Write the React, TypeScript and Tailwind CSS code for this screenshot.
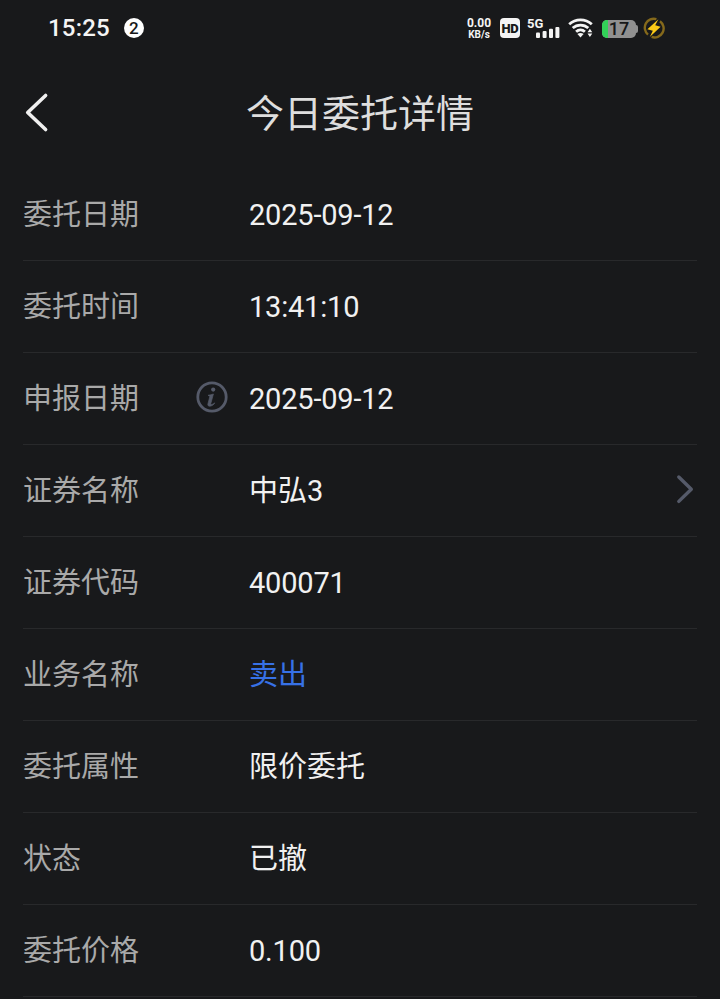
import type { ReactNode } from "react";

type Row = {
  label: string;
  value: string;
  tone?: "blue";
  info?: boolean;
  link?: boolean;
};

const ROWS: Row[] = [
  { label: "委托日期", value: "2025-09-12" },
  { label: "委托时间", value: "13:41:10" },
  { label: "申报日期", value: "2025-09-12", info: true },
  { label: "证券名称", value: "中弘3", link: true },
  { label: "证券代码", value: "400071" },
  { label: "业务名称", value: "卖出", tone: "blue" },
  { label: "委托属性", value: "限价委托" },
  { label: "状态", value: "已撤" },
  { label: "委托价格", value: "0.100" },
];

function WifiIcon() {
  return (
    <svg width="26" height="20" viewBox="0 0 26 20" fill="none" className="shrink-0">
      <g stroke="#f4f4f4" strokeWidth="2.8">
        <path d="M1.2 6.2C7.6 .3 17.4 .3 23.8 6.2" />
        <path d="M4.7 10.1c4.4-4.1 11.2-4.1 15.6 0" />
        <path d="M8.1 13.7c2.5-2.3 6.3-2.3 8.8 0" />
      </g>
      <path d="M12.5 19.4l-3.1-3.3c1.8-1.6 4.4-1.6 6.2 0z" fill="#f4f4f4" />
      <path d="M21.9 10.8l2.4 3.4h-4.8zM21.9 18.9l2.4-3.4h-4.8z" fill="#f4f4f4" />
    </svg>
  );
}

function SignalIcon() {
  return (
    <div className="relative h-6 w-8 shrink-0">
      <span className="absolute -left-px top-0 text-[13px] font-bold leading-[15px]">5G</span>
      <svg width="32" height="24" viewBox="0 0 32 24" className="absolute left-0 top-0" fill="#f4f4f4">
        <rect x="8" y="16.5" width="4" height="5.5" rx="1" />
        <rect x="14.6" y="15" width="4" height="7" rx="1" />
        <rect x="21" y="12.7" width="4" height="9.3" rx="1" />
        <rect x="27.4" y="11" width="4" height="11" rx="1" />
      </svg>
    </div>
  );
}

function Battery() {
  return (
    <div className="flex shrink-0 items-center pt-px">
      <div className="relative flex h-[18px] w-[34px] items-center justify-center rounded-[5px] bg-[#909090]">
        <div className="absolute inset-y-0 left-0 w-[6px] rounded-l-[5px] bg-[#32d158]" />
        <span className="relative text-[18px] font-medium leading-[22px] text-[#171819]">17</span>
      </div>
      <div className="h-2 w-[2px] rounded-r-full bg-[#909090]" />
    </div>
  );
}

function ChargeIcon() {
  return (
    <svg width="22" height="22" viewBox="0 0 22 22" fill="none" className="shrink-0">
      <path d="M13.4 2.1A9 9 0 0 0 5 17.6" stroke="#85691b" strokeWidth="2.4" />
      <path d="M17 4.2A9 9 0 0 1 8.6 19.9" stroke="#85691b" strokeWidth="2.4" />
      <path d="M15.4 2.2L4.4 12.2l5.4 1.6L6.8 20l10.8-10.2-5.4-1.6z" fill="#fac917" />
    </svg>
  );
}

function StatusBar() {
  return (
    <header className="flex h-14 items-center pl-[48px] pr-[55px] text-[#f4f4f4]">
      <span className="text-[24px] font-medium leading-none tracking-[0.2px]">15:25</span>
      <span className="ml-[14px] flex size-5 items-center justify-center rounded-full bg-white text-[17px] font-medium leading-none text-[#171819]">
        2
      </span>
      <div className="ml-auto flex items-center">
        <div className="flex w-[26px] flex-col items-center font-bold">
          <div className="text-[12px] leading-[12px]">0.00</div>
          <div className="text-[10px] leading-[11px]">KB/s</div>
        </div>
        <div className="ml-2 flex h-5 w-5 items-center justify-center rounded-[4px] bg-[#f4f4f4] text-[13px] font-black leading-none tracking-[-0.3px] text-[#171819]">
          HD
        </div>
        <div className="ml-2">
          <SignalIcon />
        </div>
        <div className="ml-2">
          <WifiIcon />
        </div>
        <div className="ml-2">
          <Battery />
        </div>
        <div className="ml-[5px]">
          <ChargeIcon />
        </div>
      </div>
    </header>
  );
}

function TitleBar({ children }: { children: ReactNode }) {
  return (
    <div className="grid h-[113px] grid-cols-[1fr_auto_1fr] items-center">
      <button type="button" aria-label="返回" className="mb-[2px] ml-[24px] w-7">
        <svg width="26" height="42" viewBox="0 0 26 42" fill="none">
          <path
            d="M21.6 4.5L3.7 21.5l17.9 17"
            stroke="#f0f0f0"
            strokeWidth="3.6"
            strokeLinecap="round"
            strokeLinejoin="round"
          />
        </svg>
      </button>
      <h1 className="pt-[3px] text-[38px] leading-[56px] text-[#dedede]">{children}</h1>
    </div>
  );
}

function InfoIcon() {
  return (
    <svg width="32" height="32" viewBox="0 0 32 32" fill="none" className="mb-[4px] shrink-0">
      <circle cx="16" cy="16" r="14.2" stroke="#555a69" strokeWidth="2.8" />
      <circle cx="17.2" cy="8.6" r="2.1" fill="#555a69" />
      <path
        d="M12 14.3c2-.1 3.8-.8 5.4-1.3L14.9 22.2c-.4 1.6.6 2 3.9-.3-2.6 4-7.6 4.4-6.9 1.1l2-7.7z"
        fill="#555a69"
        stroke="#555a69"
        strokeWidth=".7"
        strokeLinejoin="round"
      />
    </svg>
  );
}

function DetailRow({ row }: { row: Row }) {
  const numeric = /^[\d.:-]+$/.test(row.value);

  return (
    <li className="flex h-[92px] items-center border-b border-[#28292b] text-[29px] leading-[42px]">
      <div className="flex w-[226px] items-center justify-between pr-[21px] text-[#a9a9a9]">
        <span>{row.label}</span>
        {row.info && <InfoIcon />}
      </div>
      <span
        className={`${row.tone === "blue" ? "text-[#3771e6]" : "text-[#f1f1f1]"} ${numeric ? "tracking-[-0.2px]" : ""}`}
      >
        {row.value}
      </span>
      {row.link && (
        <svg width="20" height="32" viewBox="0 0 20 32" fill="none" className="mb-[4px] ml-auto mr-[2px]">
          <path
            d="M3.8 4l12.5 12.2L3.8 28.4"
            stroke="#555a69"
            strokeWidth="3.4"
            strokeLinecap="round"
            strokeLinejoin="round"
          />
        </svg>
      )}
    </li>
  );
}

export default function App() {
  return (
    <main className="h-[999px] w-full overflow-hidden bg-[#18191b] font-[Roboto,'Noto_Sans_CJK_SC',sans-serif]">
      <StatusBar />
      <TitleBar>今日委托详情</TitleBar>
      <ul className="px-[23px]">
        {ROWS.map((row) => (
          <DetailRow key={row.label} row={row} />
        ))}
      </ul>
    </main>
  );
}
